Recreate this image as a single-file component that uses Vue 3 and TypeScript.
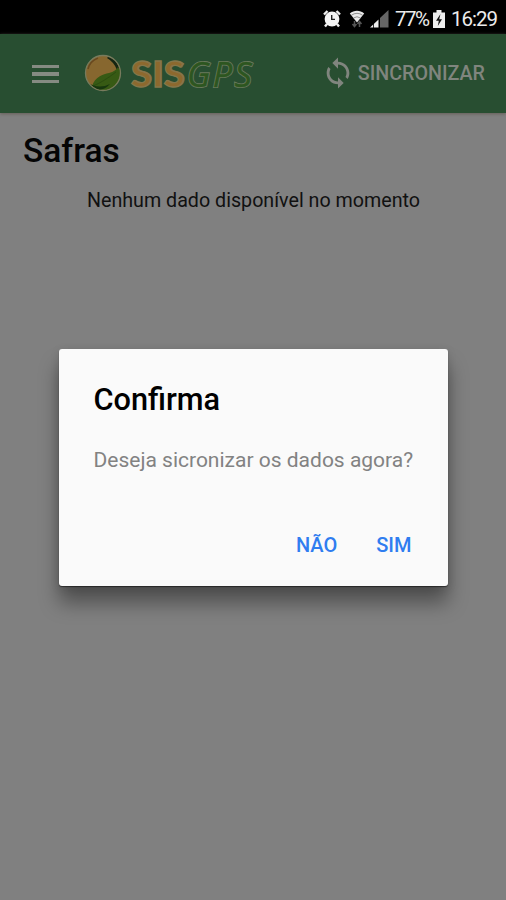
<script setup lang="ts">
import { ref } from 'vue'

const time = ref('16:29')
const battery = ref('77%')
const actions = ['NÃO', 'SIM']
</script>

<template>
  <div class="screen">
    <div class="status">
      <svg class="s-alarm" width="18" height="18" viewBox="0 0 18 18">
        <path d="M1 4.500 4.500 1M17 4.500 13.500 1M4 14 2 16.500M14 14l2 2.500" stroke="#eee" stroke-width="2.400" />
        <circle cx="9" cy="9" r="7.400" fill="#f4f4f4" />
        <path d="M8.700 5v4.400H12" fill="none" stroke="#222" stroke-width="1.400" />
      </svg>
      <svg class="s-wifi" width="16" height="18" viewBox="0 0 16 18">
        <path d="M.8 3.600C5-.2 11-.2 15.200 3.600L8 12.500Z" fill="#e8e8e8" />
        <path d="M2.300 5.300Q8 1.300 13.700 5.300M4.500 8Q8 5.500 11.500 8" fill="none" stroke="#666" stroke-width=".7" />
        <path d="M5.500 11v5M3.500 14l2 2.500 2-2.500M10.500 17v-5M8.500 14l2-2.500 2 2.500" fill="none" stroke="#555" stroke-width="1.500" />
      </svg>
      <svg class="s-signal" width="19" height="18" viewBox="0 0 19 18">
        <path d="M0 17.500 8.500 9.500V17.500Z" fill="#eee" />
        <path d="M10 8 18.500 0V17.500H10Z" fill="#666" />
        <path d="M3.500 12v6" stroke="#000" stroke-width=".8" />
      </svg>
      <span class="pct">{{ battery }}</span>
      <svg class="s-batt" width="12" height="18" viewBox="0 0 12 18">
        <path d="M3.500 0h5v2.500H12V18H0V2.500h3.500Z" fill="#eee" />
        <path d="M7.500 4 3 10.800h2.800L4.800 16 9 9.200H6.200Z" fill="#111" />
      </svg>
      <span class="clock">{{ time }}</span>
    </div>

    <header class="bar">
      <button class="menu" aria-label="Menu"><i /><i /><i /></button>
      <svg class="logo" width="172" height="42" viewBox="0 0 172 42">
        <defs><clipPath id="ball"><circle cx="20" cy="21" r="17.200" /></clipPath></defs>
        <circle cx="20" cy="21" r="17.500" fill="#87672f" />
        <g clip-path="url(#ball)">
          <path d="M26 4Q35 8 37 20L34 18Q31 10 24 6Z" fill="#152512" />
          <path d="M9 34C12 25 20 22 26 21Q33 19 35 15L39 21 34 35 20 40Z" fill="#375a14" />
          <path d="M10 34Q20 30 33 20" fill="none" stroke="#294910" stroke-width=".8" />
          <path d="M4 30Q15 38 27 32Q22 38 14 38Z" fill="#17370f" />
          <path d="M5 17Q7 9 15 6" fill="none" stroke="#69491f" stroke-width="1.600" />
        </g>
        <circle cx="20" cy="21" r="17.500" fill="none" stroke="#777b5d" stroke-width="1.300" />
        <text class="sis" x="48" y="34.500" textLength="54" lengthAdjust="spacingAndGlyphs">SIS</text>
        <text class="gps" x="104" y="34.500" textLength="65" lengthAdjust="spacing">GPS</text>
        <text class="gps inner" x="104" y="34.500" textLength="65" lengthAdjust="spacing">GPS</text>
      </svg>
      <button class="sync">
        <svg width="34" height="34" viewBox="0 0 24 24">
          <path d="M12 4V1L8 5l4 4V6c3.310 0 6 2.690 6 6 0 1.010-.25 1.970-.7 2.800l1.460 1.460C19.540 15.030 20 13.570 20 12c0-4.420-3.580-8-8-8zm0 14c-3.310 0-6-2.690-6-6 0-1.010.25-1.970.7-2.800L5.240 7.740C4.460 8.970 4 10.430 4 12c0 4.420 3.580 8 8 8v3l4-4-4-4v3z" fill="currentColor" />
        </svg>
        <span>SINCRONIZAR</span>
      </button>
    </header>

    <main>
      <h1>Safras</h1>
      <p>Nenhum dado disponível no momento</p>
    </main>

    <div class="overlay">
      <section class="dialog" role="dialog" aria-modal="true">
        <h2>Confirma</h2>
        <p>Deseja sicronizar os dados agora?</p>
        <div class="actions">
          <button v-for="a in actions" :key="a">{{ a }}</button>
        </div>
      </section>
    </div>
  </div>
</template>

<style>
body { margin: 0; background: #808080; }
</style>

<style scoped>
.screen { position: relative; height: 900px; background: #808080; font-family: Roboto, sans-serif; overflow: hidden; color: #050505; }
button { border: 0; background: none; padding: 0; margin: 0; font: inherit; color: inherit; }
.status { height: 34px; background: #000; color: #ececec; display: flex; align-items: center; padding: 4px 8px 0 0; box-sizing: border-box; justify-content: flex-end; font-size: 20.500px; white-space: nowrap; }
.s-wifi { margin-left: 8px; }
.s-signal { margin-left: 5px; }
.pct { margin-left: 6px; width: 35px; letter-spacing: -1.500px; }
.s-batt { margin-left: 3px; }
.clock { margin-left: 6px; width: 47px; letter-spacing: -1px; }
.bar { height: 79px; box-sizing: border-box; background: #284e31; display: flex; align-items: center; padding: 0 21px 1px 32px; box-shadow: 0 1px 3px #665f58; }
.menu { width: 27px; display: flex; flex-direction: column; gap: 4px; padding-top: 2px; }
.menu i { height: 3.500px; background: #858b82; }
.logo { margin-left: 24px; overflow: visible; }
.sis { font: 900 36px Lato, sans-serif; fill: #8d692e; stroke: #85764a; stroke-width: 1.400px; }
.gps { font: italic 400 34.500px "Open Sans", sans-serif; fill: none; stroke: #6b7a5e; stroke-width: 2.200px; }
.gps.inner { stroke: #2d5620; stroke-width: .5px; fill: #2d5620; }
.sync { margin-left: auto; display: flex; align-items: center; color: #80857e; font-size: 19.700px; font-weight: 500; }
.sync span { margin-left: 3px; }
h1, h2, p { margin: 0; }
h1 { padding: 18px 23px 0; font-size: 33.500px; line-height: 40px; font-weight: 500; }
main p { margin-top: 18px; padding-left: 1px; text-align: center; font-size: 19.680px; line-height: 24px; color: #111; }
.overlay { position: absolute; inset: 34px 0 0; display: flex; justify-content: center; align-items: center; }
.dialog { width: 389px; height: 237px; box-sizing: border-box; background: #fafafa; border-radius: 3px; padding: 33px 34px 22px 35px; box-shadow: 0 1px 1px rgba(0,0,0,.5), 0 17px 20px rgba(0,0,0,.38), 0 2px 10px rgba(0,0,0,.12); }
h2 { font-size: 30.700px; line-height: 36px; font-weight: 500; color: #000; }
.dialog p { margin-top: 30px; font-size: 21px; line-height: 25px; color: #828282; white-space: nowrap; }
.actions { margin-top: 59px; padding-right: 2px; display: flex; justify-content: flex-end; gap: 39px; color: #2f7df0; font-size: 20px; line-height: 26px; font-weight: 500; }
</style>
